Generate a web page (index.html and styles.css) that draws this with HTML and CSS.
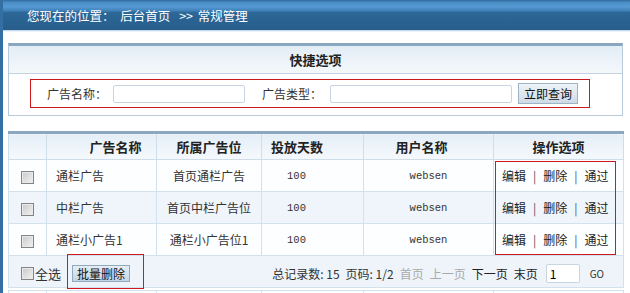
FILE: index.html
```html
<!DOCTYPE html>
<html lang="zh">
<head>
    <meta charset="UTF-8">
    <title>常规管理</title>
    <link rel="stylesheet" href="styles.css">
</head>
<body>
<div class="page">
    <div class="topbar">
        <span>您现在的位置：</span>
        <a class="crumb">后台首页</a>
        <span class="arrow">&gt;&gt;</span>
        <span>常规管理</span>
    </div>
    <div class="content">
        <div class="panel">
            <div class="panel-head">快捷选项</div>
            <div class="panel-body">
                <div class="search">
                    <label class="lbl">广告名称：</label>
                    <input class="field field-name" type="text">
                    <label class="lbl lbl-type">广告类型：</label>
                    <input class="field field-type" type="text">
                    <button class="btn" type="button">立即查询</button>
                </div>
            </div>
        </div>

        <div class="list">
            <table class="grid">
                <colgroup>
                    <col style="width:38px"><col style="width:110px"><col style="width:105px">
                    <col style="width:102px"><col style="width:130px"><col style="width:130px">
                </colgroup>
                <thead>
                    <tr>
                        <th></th>
                        <th class="h-name">广告名称</th>
                        <th>所属广告位</th>
                        <th class="h-days">投放天数</th>
                        <th class="h-user">用户名称</th>
                        <th>操作选项</th>
                    </tr>
                </thead>
                <tbody>
                    <tr>
                        <td class="c-check"><span class="cb"></span></td>
                        <td class="c-name">通栏广告</td>
                        <td class="c-pos">首页通栏广告</td>
                        <td class="c-days">100</td>
                        <td class="c-user">websen</td>
                        <td class="c-ops"><a>编辑</a><i>|</i><a>删除</a><i>|</i><a>通过</a></td>
                    </tr>
                    <tr class="alt">
                        <td class="c-check"><span class="cb"></span></td>
                        <td class="c-name">中栏广告</td>
                        <td class="c-pos">首页中栏广告位</td>
                        <td class="c-days">100</td>
                        <td class="c-user">websen</td>
                        <td class="c-ops"><a>编辑</a><i>|</i><a>删除</a><i>|</i><a>通过</a></td>
                    </tr>
                    <tr>
                        <td class="c-check"><span class="cb"></span></td>
                        <td class="c-name">通栏小广告1</td>
                        <td class="c-pos">通栏小广告位1</td>
                        <td class="c-days">100</td>
                        <td class="c-user">websen</td>
                        <td class="c-ops"><a>编辑</a><i>|</i><a>删除</a><i>|</i><a>通过</a></td>
                    </tr>
                    <tr class="foot">
                        <td colspan="6">
                            <div class="foot-bar">
                                <div class="foot-left">
                                    <span class="cb"></span><span class="all">全选</span>
                                    <button class="btn btn-del" type="button">批量删除</button>
                                </div>
                                <div class="pager">
                                    <span>总记录数: 15</span>
                                    <span>页码: 1/2</span>
                                    <span class="off">首页</span>
                                    <span class="off">上一页</span>
                                    <a>下一页</a>
                                    <a>末页</a>
                                    <input class="page-no" type="text" value="1">
                                    <span class="go">GO</span>
                                </div>
                            </div>
                        </td>
                    </tr>
                </tbody>
            </table>

            <table class="grid grid-next">
                <colgroup>
                    <col style="width:38px"><col style="width:110px"><col style="width:105px">
                    <col style="width:102px"><col style="width:130px"><col style="width:130px">
                </colgroup>
                <tr>
                    <td class="c-check"><span class="cb"></span></td>
                    <td class="c-name">通栏广告</td>
                    <td class="c-pos">首页通栏广告</td>
                    <td class="c-days">100</td>
                    <td class="c-user">websen</td>
                    <td class="c-ops"><a>编辑</a><i>|</i><a>删除</a><i>|</i><a>通过</a></td>
                </tr>
            </table>

            <div class="mark mark-ops"></div>
            <div class="mark mark-del"></div>
        </div>
    </div>
</div>
</body>
</html>
```

FILE: styles.css
```css
html, body{
    margin: 0;
    height: 293px;
    overflow: hidden;
}
body{
    font-family: "Noto Sans CJK SC", "Liberation Sans", sans-serif;
    font-size: 12px;
    color: #222;
    background: #fff;
}
a{
    color: #222;
    text-decoration: none;
}
.page{
    border-left: 3px solid #336fa2;
    min-height: 293px;
}
.topbar{
    height: 30px;
    line-height: 32px;
    padding-left: 24px;
    color: #fff;
    font-size: 12.5px;
    background: linear-gradient(#2f6b9d 0, #4a8dc6 8%, #559bd2 22%, #3f80b8 36%, #2c6797 42%, #275e8c 100%);
    border-bottom: 1px solid #c5d7e6;
    box-shadow: 0 1px 0 #eef4f9;
}
.topbar .crumb{
    color: #fff;
    margin-left: 3px;
}
.topbar .arrow{
    margin: 0 2px 0 6px;
}
.content{
    padding: 12px 7px 0 5px;
}
.panel{
    border: 1px solid #b8cad9;
    border-top: 3px solid #8ba7bf;
}
.panel-head{
    height: 27px;
    line-height: 27px;
    text-align: center;
    font-weight: bold;
    font-size: 13px;
    background: linear-gradient(#e3edf6, #f4f8fb);
    border-bottom: 1px solid #c3d2de;
}
.panel-body{
    height: 41px;
    padding: 5px 0 0 21px;
    box-sizing: border-box;
}
.search{
    width: 560px;
    height: 29px;
    box-sizing: border-box;
    border: 1px solid #d0181f;
    display: flex;
    align-items: center;
    padding-left: 16px;
}
.lbl{
    color: #333;
    margin-right: 6px;
}
.lbl-type{
    margin-left: 17px;
    margin-right: 8px;
}
.field{
    height: 18px;
    box-sizing: border-box;
    border: 1px solid #c8d5e0;
    border-radius: 2px;
    padding: 0 3px;
    font: inherit;
}
.field-name{
    width: 132px;
}
.field-type{
    width: 182px;
}
.btn{
    height: 21px;
    padding: 0 5px;
    margin-left: 6px;
    font: inherit;
    color: #111;
    border: 1px solid #9db4c7;
    background: linear-gradient(#eef4f9, #cddbe7);
}
.list{
    position: relative;
    margin-top: 15px;
}
.grid{
    width: 100%;
    table-layout: fixed;
    border-collapse: collapse;
    border: 1px solid #b8cad9;
    border-top: 3px solid #8ba7bf;
}
.grid th{
    height: 25px;
    padding: 0;
    font-size: 13px;
    font-weight: bold;
    background: linear-gradient(#e4eef7, #f5f9fc);
    border: 1px solid #cfdde9;
    border-top: 0;
}
.grid th.h-name{
    padding-left: 28px;
}
.grid th.h-days{
    text-align: left;
    padding-left: 9px;
}
.grid th.h-user{
    padding-right: 14px;
}
.grid td{
    height: 31px;
    padding: 0;
    border: 1px solid #d3e1ec;
    background: #fdfeff;
    color: #333;
}
.grid tr.alt td{
    background: #eff5fa;
}
.c-check{
    text-align: center;
}
.c-name{
    padding-left: 9px !important;
}
.c-pos{
    text-align: center;
}
.c-days{
    text-align: center;
    padding-right: 32px !important;
    font-family: "Liberation Mono", monospace;
    font-size: 10.5px;
}
.c-user{
    text-align: center;
    font-family: "Liberation Mono", monospace;
    font-size: 10.5px;
}
.c-ops{
    padding-left: 8px !important;
}
.c-ops i{
    font-style: normal;
    color: #555;
    margin: 0 7px;
}
.cb{
    display: inline-block;
    width: 13px;
    height: 13px;
    box-sizing: border-box;
    border: 1px solid #858585;
    background: linear-gradient(135deg, #c9c9c9, #f3f3f3);
    box-shadow: inset 0 0 0 1px #e9e9e9;
    vertical-align: middle;
}
.grid tr.foot td{
    height: 31px;
    background: #eef4fa;
}
.foot-bar{
    display: flex;
    justify-content: space-between;
    align-items: center;
    padding: 4px 19px 0 12px;
}
.foot-left{
    display: flex;
    align-items: center;
}
.all{
    margin-left: 1px;
    font-size: 13px;
}
.btn-del{
    height: 17px;
    line-height: 15px;
    margin-left: 11px;
    padding: 0 4px;
    border-color: #8fa9be;
    background: linear-gradient(#e6eef5, #c3d5e3);
}
.pager{
    display: flex;
    align-items: center;
    gap: 6px;
    color: #333;
}
.pager .off{
    color: #aaa;
}
.page-no{
    width: 34px;
    height: 19px;
    box-sizing: border-box;
    border: 1px solid #c8d5e0;
    border-radius: 2px;
    padding: 0 3px;
    font: inherit;
    margin-left: 2px;
}
.go{
    font-size: 10px;
    margin-left: 4px;
}
.grid-next{
    margin-top: 2px;
    border-top: 1px solid #a5a5a5;
}
.mark{
    position: absolute;
    border: 1px solid #d0181f;
    pointer-events: none;
}
.mark-ops{
    left: 487px;
    top: 30px;
    width: 119px;
    height: 92px;
}
.mark-del{
    left: 59px;
    top: 123px;
    width: 75px;
    height: 33px;
}
```
